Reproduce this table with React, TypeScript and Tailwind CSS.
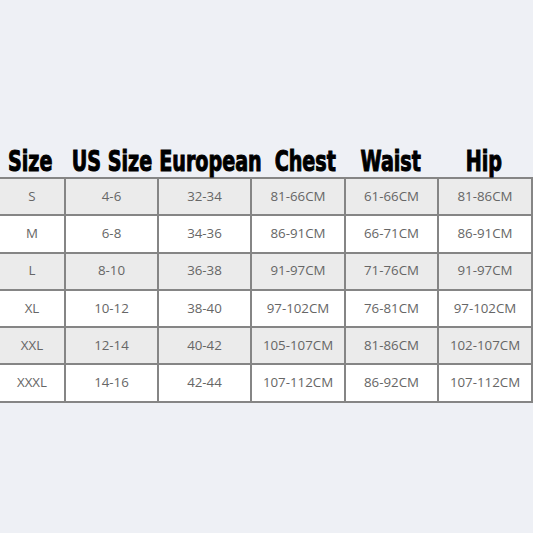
import React from "react";

const headers: [string, string][] = [
  ["Size", "-translate-x-[3px]"],
  ["US Size", "-translate-x-[1px]"],
  ["European", "translate-x-[5px]"],
  ["Chest", "translate-x-[6px]"],
  ["Waist", "-translate-x-[2px]"],
  ["Hip", "-translate-x-[2px]"],
];
const rows = [
  ["S", "4-6", "32-34", "81-66CM", "61-66CM", "81-86CM"],
  ["M", "6-8", "34-36", "86-91CM", "66-71CM", "86-91CM"],
  ["L", "8-10", "36-38", "91-97CM", "71-76CM", "91-97CM"],
  ["XL", "10-12", "38-40", "97-102CM", "76-81CM", "97-102CM"],
  ["XXL", "12-14", "40-42", "105-107CM", "81-86CM", "102-107CM"],
  ["XXXL", "14-16", "42-44", "107-112CM", "86-92CM", "107-112CM"],
];

const cols = "grid grid-cols-[66px_93px_93px_94px_93px_94px]";

export default function App() {
  return (
    <div className="w-[533px] h-[533px] bg-[#eef0f5] flex flex-col pt-[141px] overflow-hidden">
      <div className={`${cols} h-[36px]`}>
        {headers.map(([h, t]) => (
          <div key={h} className="flex items-end justify-center pb-[1px] whitespace-nowrap">
            <span
              className={`inline-block scale-x-[0.76] ${t} text-[28px] leading-none font-bold text-black`}
              style={{ fontFamily: '"DejaVu Sans Condensed", "DejaVu Sans", sans-serif', WebkitTextStroke: "1px black" }}
            >
              {h}
            </span>
          </div>
        ))}
      </div>
      <div className="border-t-2 border-[#858585]">
        {rows.map((r, i) => (
          <div
            key={r[0]}
            className={`${cols} h-[37.3px] border-b-2 border-[#858585] ${i % 2 === 0 ? "bg-[#ebebeb]" : "bg-white"}`}
          >
            {r.map((c, j) => (
              <div
                key={j}
                className="flex items-center justify-center border-r-2 border-[#858585] text-[13.3px] text-[#666666]"
                style={{ fontFamily: '"Open Sans", sans-serif' }}
              >
                {c}
              </div>
            ))}
          </div>
        ))}
      </div>
    </div>
  );
}
